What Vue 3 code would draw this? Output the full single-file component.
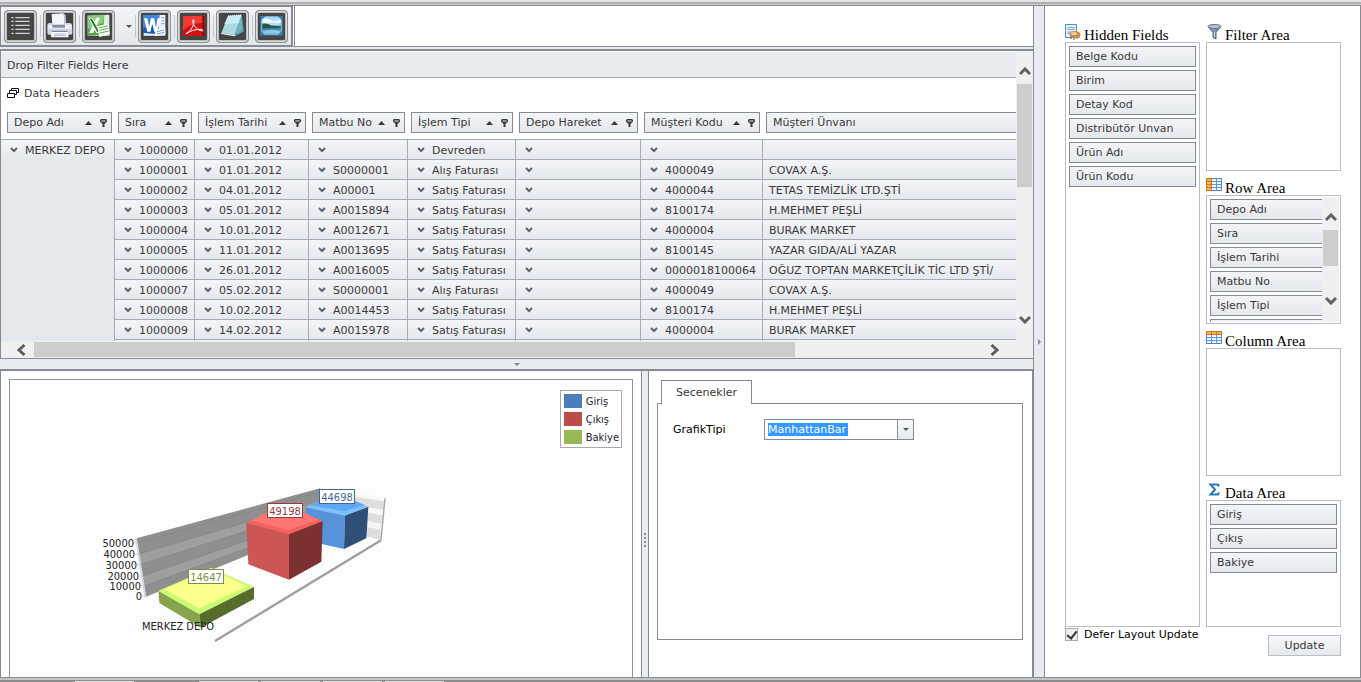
<script setup>
import { ref } from 'vue'

const tools = [
  { id: 'list', label: 'Field list' },
  { id: 'print', label: 'Print' },
  { id: 'excel', label: 'Export to Excel', menu: true },
  { id: 'word', label: 'Export to Word' },
  { id: 'pdf', label: 'Export to PDF' },
  { id: 'note', label: 'Export to text' },
  { id: 'image', label: 'Export to image' }
]

const columns = [
  { title: 'Depo Adı', width: 114, sort: true },
  { title: 'Sıra', width: 80, sort: true },
  { title: 'İşlem Tarihi', width: 114, sort: true },
  { title: 'Matbu No', width: 99, sort: true },
  { title: 'İşlem Tipi', width: 108, sort: true },
  { title: 'Depo Hareket', width: 125, sort: true },
  { title: 'Müşteri Kodu', width: 122, sort: true },
  { title: 'Müşteri Ünvanı', width: 507, sort: false }
]

const rows = [
  ['1000000', '01.01.2012', '', 'Devreden', '', '', ''],
  ['1000001', '01.01.2012', 'S0000001', 'Alış Faturası', '', '4000049', 'COVAX A.Ş.'],
  ['1000002', '04.01.2012', 'A00001', 'Satış Faturası', '', '4000044', 'TETAS TEMİZLİK LTD.ŞTİ'],
  ['1000003', '05.01.2012', 'A0015894', 'Satış Faturası', '', '8100174', 'H.MEHMET PEŞLİ'],
  ['1000004', '10.01.2012', 'A0012671', 'Satış Faturası', '', '4000004', 'BURAK MARKET'],
  ['1000005', '11.01.2012', 'A0013695', 'Satış Faturası', '', '8100145', 'YAZAR GIDA/ALİ YAZAR'],
  ['1000006', '26.01.2012', 'A0016005', 'Satış Faturası', '', '0000018100064', 'OĞUZ TOPTAN MARKETÇİLİK TİC LTD ŞTİ/'],
  ['1000007', '05.02.2012', 'S0000001', 'Alış Faturası', '', '4000049', 'COVAX A.Ş.'],
  ['1000008', '10.02.2012', 'A0014453', 'Satış Faturası', '', '8100174', 'H.MEHMET PEŞLİ'],
  ['1000009', '14.02.2012', 'A0015978', 'Satış Faturası', '', '4000004', 'BURAK MARKET'],
  ['', '', '', '', '', '', '']
]

const hiddenFields = ['Belge Kodu', 'Birim', 'Detay Kod', 'Distribütör Unvan', 'Ürün Adı', 'Ürün Kodu']
const areas = [
  { id: 'filter', title: 'Filter Area', fields: [] },
  { id: 'row', title: 'Row Area', fields: ['Depo Adı', 'Sıra', 'İşlem Tarihi', 'Matbu No', 'İşlem Tipi', ''], scroll: true },
  { id: 'column', title: 'Column Area', fields: [] },
  { id: 'data', title: 'Data Area', fields: ['Giriş', 'Çıkış', 'Bakiye'] }
]

const legend = [
  { name: 'Giriş', tone: 'blue' },
  { name: 'Çıkış', tone: 'red' },
  { name: 'Bakiye', tone: 'green' }
]

const axis = [
  { v: '50000', x: 134, y: 547 },
  { v: '40000', x: 135, y: 558 },
  { v: '30000', x: 137, y: 569 },
  { v: '20000', x: 139, y: 580 },
  { v: '10000', x: 141, y: 590 },
  { v: '0', x: 142, y: 600 }
]

const chartType = ref('ManhattanBar')
const defer = ref(true)
</script>

<template>
  <div class="app">
    <div class="top-strip"></div>
    <div class="body">
      <main class="left">
        <header class="tool-row">
          <div class="toolbar">
            <template v-for="(t, i) in tools" :key="t.id">
              <i v-if="i" class="sep"></i>
              <button class="tool" type="button" :aria-label="t.label">
                <svg viewBox="0 0 99 99" aria-hidden="true">
                  <g v-if="t.id === 'list'" fill="#d4d4d4">
                    <path d="M22 21h7v4h-7zM22 32h7v4h-7zM22 44h7v4h-7zM22 56h7v4h-7zM22 68h7v4h-7z" />
                    <path d="M34 21h43v4H34zM34 32h43v4H34zM34 44h43v4H34zM34 56h43v4H34zM34 68h43v4H34z" />
                  </g>
                  <g v-else-if="t.id === 'print'">
                    <path d="M26 12l36-2 4 34H28z" fill="#f4f7fc" />
                    <path d="M62 10l6 6 2 28h-6z" fill="#b9c2d4" />
                    <path d="M13 44q0-5 6-5h9v6h38v-6h14q6 0 7 5l1 25q0 5-5 5H18q-5 0-5-5z" fill="#cfd5e4" />
                    <path d="M16 44h68l2 12H14z" fill="#eef1f8" />
                    <path d="M28 45h38v8H28z" fill="#8790a8" />
                    <path d="M26 62h48l3 20H24z" fill="#f9fbfe" />
                    <path d="M26 62h48v4H26z" fill="#7c849c" />
                    <path d="M34 72h34M33 77h36" stroke="#a9bcdc" stroke-width="3" />
                  </g>
                  <g v-else-if="t.id === 'excel'">
                    <path d="M17 17l65-3v63H17z" fill="#dff1dc" />
                    <path d="M17 17l50-3-4 60-46 3z" fill="#55a54c" />
                    <path d="M17 17l50-3-4 24L17 58z" fill="#8ac97f" />
                    <path d="M43 23h11L34 69H21z" fill="#f3fbf0" />
                    <path d="M20 25h12l24 44H43z" fill="#fff" />
                    <path d="M23 26h7l23 41h-7z" fill="#2c7d2d" />
                    <path d="M45 48l34-7 5 32-32 8z" fill="#f6fcf6" />
                    <path d="M50 54l27-6M52 61l27-6M53 69l27-6" stroke="#62ac5b" stroke-width="3" />
                  </g>
                  <g v-else-if="t.id === 'word'">
                    <path d="M17 15h65v62H17z" fill="#eef5fd" />
                    <path d="M15 16l49-2-2 59-47-4z" fill="#1d5db4" />
                    <path d="M15 16l49-2-1 26-48 14z" fill="#4189d6" />
                    <path d="M18 25h10l5 26 6-26h9l6 26 5-26h9L58 65H49L43 41l-6 24h-9z" fill="#fff" />
                    <path d="M70 23h9M70 32h9M70 41h9" stroke="#6e9fd9" stroke-width="3" />
                    <path d="M50 60l31-8 2 20-31 7z" fill="#f7fbff" />
                    <path d="M56 65l22-5M57 72l22-5" stroke="#6e9fd9" stroke-width="3" />
                  </g>
                  <g v-else-if="t.id === 'pdf'">
                    <path d="M18 19l64-2v61H18z" fill="#d40f12" />
                    <path d="M18 19l64-2v22Q43 36 18 62z" fill="#ee3b36" />
                    <path d="M76 18l6-1v61h-6z" fill="#8f0708" />
                    <path d="M27 71c8-2 23-20 24-38 0-6-5-5-4 1 3 16 16 27 28 29 4 0 3-5-2-5-15-1-31 4-43 11q-5 3-3 2z" fill="none" stroke="#fff" stroke-width="3" />
                  </g>
                  <g v-else-if="t.id === 'note'">
                    <path d="M77 15l7 50-28 14z" fill="#579aa4" />
                    <path d="M36 18l41-3-21 60-40-6z" fill="#a9d9e2" />
                    <path d="M36 18l41-3-9 25-43 3z" fill="#cbedf2" />
                    <path d="M56 75l21-60 3 46z" fill="#70b4c2" />
                    <path d="M16 69l40 6 1 4-42-7z" fill="#fff" />
                    <path d="M36 18l41-3" stroke="#e3f7fa" stroke-width="4" stroke-dasharray="3 3" />
                  </g>
                  <g v-else>
                    <path d="M17 18h65v58H17z" fill="#70b2df" />
                    <path d="M22 22h55v24H22z" fill="#b5dcf4" />
                    <path d="M22 27q14-4 25 4t30-3v10H22z" fill="#f5fbfe" />
                    <path d="M22 47h55v24H22z" fill="#3c86b6" />
                    <path d="M22 41q14-3 28 6l27 3v4q-30 0-55 1z" fill="#29563f" />
                    <path d="M22 63q30-8 55 0v8H22z" fill="#8cc9e2" />
                    <path d="M17 18h14L17 32zM82 18v14L68 18zM17 76V62l14 14zM82 76H68l14-14z" fill="#2d7cc7" />
                  </g>
                </svg>
              </button>
              <button v-if="t.menu" class="tool-menu" type="button" aria-label="Excel options"><i class="tri-down"></i></button>
            </template>
          </div>
          <div class="tool-rest"></div>
        </header>

        <section class="pivot">
          <div class="pivot-main">
            <div class="pivot-view">
              <div class="drop-filter">Drop Filter Fields Here</div>
              <div class="data-headers">
                <svg class="stack" viewBox="0 0 12 11" fill="#fff" stroke="#111" aria-hidden="true">
                  <path d="M4.500 .5h7v4h-7z" /><path d="M2.500 2.500h7v4h-7z" /><path d="M.5 5.500h7v4h-7z" />
                </svg>
                <span>Data Headers</span>
              </div>
              <table class="grid">
                <colgroup>
                  <col v-for="c in columns" :key="c.title" :style="{ width: c.width + 'px' }" />
                </colgroup>
                <thead>
                  <tr>
                    <th v-for="c in columns" :key="c.title" scope="col">
                      <button class="head-field" type="button">
                        <span>{{ c.title }}</span>
                        <svg v-if="c.sort" viewBox="0 0 24 8" aria-hidden="true">
                          <path d="M1 6l3.500-4L8 6z" />
                          <path d="M17 0h5l1 1v1.500L20.500 5v3h-2V5L16 2.500V1z" />
                          <path d="M17.500 2h4" stroke="#f1f2f6" />
                        </svg>
                      </button>
                    </th>
                  </tr>
                </thead>
                <tbody>
                  <tr v-for="(r, i) in rows" :key="i">
                    <td v-if="i === 0" class="depot" :rowspan="rows.length">
                      <svg class="chev" viewBox="0 0 8 6" aria-hidden="true"><path d="M1 1l3 3 3-3" /></svg>MERKEZ DEPO
                    </td>
                    <td v-for="(v, k) in r" :key="k">
                      <svg v-if="k < 6" class="chev" viewBox="0 0 8 6" aria-hidden="true"><path d="M1 1l3 3 3-3" /></svg>{{ v }}
                    </td>
                  </tr>
                </tbody>
              </table>
            </div>
            <div class="vbar">
              <span class="arrow up"><svg viewBox="0 0 12 9"><path d="M1 7l5-5 5 5" /></svg></span>
              <span class="thumb"></span>
              <span class="track"></span>
              <span class="arrow down"><svg viewBox="0 0 12 9"><path d="M1 2l5 5 5-5" /></svg></span>
            </div>
          </div>
          <div class="hbar">
            <span class="arrow prev"><svg viewBox="0 0 9 12"><path d="M7.500 1L2 6l5.500 5" /></svg></span>
            <span class="thumb"></span>
            <span class="track"></span>
            <span class="arrow next"><svg viewBox="0 0 9 12"><path d="M1.500 1L7 6l-5.500 5" /></svg></span>
            <span class="corner"></span>
          </div>
        </section>

        <div class="h-splitter"><i></i></div>

        <section class="lower">
          <div class="chart-pane">
            <div class="chart">
              <svg class="plot" viewBox="10 380 622 297" preserveAspectRatio="xMinYMin meet" role="img" aria-label="MERKEZ DEPO">
                <svg x="90" y="475" width="310" height="180" viewBox="0 0 930 540">
                  <path d="M140 190L690 40l10 108L168 365z" fill="#8f8f8f" />
                  <path d="M147 237L692 76v22L153 268zM158 303l538-183v16L163 333z" fill="#9f9f9f" />
                  <path d="M142 203L690 52M147 237L692 76M153 268L692 98M158 303l538-183M163 333l533-197" stroke="#858585" stroke-width="2" fill="none" />
                  <path d="M138 190l28 176" stroke="#d8d8d8" stroke-width="6" />
                  <path d="M130 203h12M135 237h12M141 268h12M146 303h12M152 333h12M156 363h12" stroke="#c2c2c2" stroke-width="2" />
                  <path d="M690 40l194 30-12 125-172-40z" fill="#f7f7f7" />
                  <path d="M790 65l93 14-2 26-90-14zM800 106l79 16-2 25-77-16zM800 150l75 15-3 30-80-20z" fill="#dedede" />
                  <path d="M885 70l-12 126" stroke="#a5a5a5" stroke-width="4" />
                  <path d="M873 196L375 498" stroke="#9e9e9e" stroke-width="7" />

                  <path d="M648 97l117 24-3 101-107-24z" fill="#5693db" />
                  <path d="M765 121l70-26-6 95-67 32z" fill="#2f4f77" />
                  <path d="M648 97l42-17h105l40 15-70 27z" fill="#7bc2ff" />
                  <path d="M662 91l30-14h100l32 12-59 20z" fill="#60a6f6" />

                  <path d="M469 143l128 34v137l-122-46z" fill="#cc5654" />
                  <path d="M597 177l101-39-4 122-97 54z" fill="#7c3031" />
                  <path d="M469 143l62-29h108l59 24-101 40z" fill="#f7605d" />
                  <path d="M484 137l48-25h108l45 22-89 31z" fill="#ff7672" />

                  <path d="M205 347l123 70 4 41-124-74z" fill="#87a44d" />
                  <path d="M328 417l164-82v37l-160 86z" fill="#586d2d" />
                  <path d="M205 347l159-69 128 57-164 83z" fill="#c8fb70" />
                  <path d="M222 343l140-60 111 51-146 66z" fill="#fbff8b" />
                </svg>
                <g class="axis">
                  <text v-for="a in axis" :key="a.v" :x="a.x" :y="a.y" text-anchor="end">{{ a.v }}</text>
                  <text x="142" y="630">MERKEZ DEPO</text>
                </g>
                <g class="tag">
                  <g stroke="#3f6797"><rect x="319.500" y="489.500" width="35" height="14" /></g>
                  <g stroke="#943c3a"><rect x="267.500" y="503.500" width="35" height="14" /></g>
                  <g stroke="#77933f"><rect x="188.500" y="569.500" width="35" height="14" /></g>
                  <text x="337" y="501" fill="#3f6797">44698</text>
                  <text x="285" y="515" fill="#943c3a">49198</text>
                  <text x="206" y="581" fill="#77933f">14647</text>
                </g>
              </svg>
              <ul class="legend">
                <li v-for="l in legend" :key="l.name"><i :class="l.tone"></i>{{ l.name }}</li>
              </ul>
            </div>
          </div>
          <div class="v-splitter"><i></i><i></i><i></i><i></i></div>
          <div class="options">
            <button class="tab" type="button">Secenekler</button>
            <div class="tab-body">
              <label for="chart-type">GrafikTipi</label>
              <div class="combo">
                <select id="chart-type" v-model="chartType">
                  <option>ManhattanBar</option>
                </select>
                <span class="combo-arrow"><i class="tri-down"></i></span>
              </div>
            </div>
          </div>
        </section>
      </main>

      <div class="main-splitter"><i></i></div>

      <aside class="fields">
        <div class="field-cols">
          <section class="area">
            <h2>
              <svg viewBox="0 0 16 16" aria-hidden="true">
                <path d="M.5 .5h11v13H.5z" fill="#e9f2fb" stroke="#4f8fd0" />
                <path d="M3 3.500h6v2H3zM3 8h6v1.500H3z" fill="#fff" stroke="#78a9da" />
                <path d="M6 12v3M9 13v3M12 13v2M14 12v2" stroke="#6b4a2a" />
                <ellipse cx="10" cy="10.500" rx="5.500" ry="3.500" fill="#c98a4c" />
                <ellipse cx="9" cy="9.500" rx="3" ry="1.500" fill="#f4cf9c" />
              </svg>
              Hidden Fields
            </h2>
            <div class="box">
              <div class="items">
                <button v-for="f in hiddenFields" :key="f" class="field" type="button">{{ f }}</button>
              </div>
            </div>
          </section>
          <div class="area-stack">
            <section v-for="a in areas" :key="a.id" class="area">
              <h2>
                <svg viewBox="0 0 16 16" aria-hidden="true">
                  <g v-if="a.id === 'filter'">
                    <path d="M2.500 3L7 8.500v5l3 1.500V8.500L14.500 3z" fill="#8493ad" stroke="#53627d" />
                    <path d="M8 8h1v5H8z" fill="#e2e8f2" />
                    <ellipse cx="8.500" cy="2.500" rx="6.500" ry="2" fill="#b7c3d6" stroke="#60708c" />
                  </g>
                  <g v-else-if="a.id === 'row'">
                    <path d="M.5 1.500h15v12H.5z" fill="#f4f8fd" stroke="#4a86c8" />
                    <path d="M.5 1.500h5v12h-5z" fill="#f6b757" stroke="#cf7414" />
                    <path d="M6 4.500h9M6 7.500h9M6 10.500h9M10.500 2v11" stroke="#5c96d4" />
                    <path d="M1 4.500h4M1 7.500h4M1 10.500h4" stroke="#cf7414" />
                  </g>
                  <g v-else-if="a.id === 'column'">
                    <path d="M.5 1.500h15v12H.5z" fill="#f4f8fd" stroke="#4a86c8" />
                    <path d="M1 7.500h14M1 10.500h14M5.500 5v8M10.500 5v8" stroke="#5c96d4" />
                    <path d="M.5 1.500h15v3H.5z" fill="#f6b757" stroke="#cf7414" />
                    <path d="M5.500 2v2M10.500 2v2" stroke="#cf7414" />
                  </g>
                  <path v-else d="M13 4.500l-1-2H4.500l4.500 5-4.500 5H12l1-2" fill="none" stroke="#2c78bf" stroke-width="2" />
                </svg>
                {{ a.title }}
              </h2>
              <div class="box">
                <div class="items">
                  <button v-for="f in a.fields" :key="f" class="field" type="button">{{ f }}</button>
                </div>
                <div v-if="a.scroll" class="vbar small">
                  <span class="arrow up"><svg viewBox="0 0 12 9"><path d="M1 7l5-5 5 5" /></svg></span>
                  <span class="thumb"></span>
                  <span class="track"></span>
                  <span class="arrow down"><svg viewBox="0 0 12 9"><path d="M1 2l5 5 5-5" /></svg></span>
                </div>
              </div>
            </section>
          </div>
        </div>
        <footer class="actions">
          <label><input v-model="defer" type="checkbox" />Defer Layout Update</label>
          <button type="button">Update</button>
        </footer>
      </aside>
    </div>
    <div class="bottom-strip"><i></i><b></b><i></i><i></i><i></i><i></i></div>
  </div>
</template>

<style>
html, body, #app { height: 100%; }
</style>

<style scoped>
* { box-sizing: border-box; }
.app {
  display: flex; flex-direction: column; height: 100vh; overflow: hidden;
  background: #fff; color: #393939;
  font: 11px/14px "DejaVu Sans", Verdana, sans-serif;
}
button { font: inherit; color: inherit; margin: 0; }
.top-strip { flex: none; height: 5px; background: linear-gradient(#e6e6e6 2px, #b0b0b0 2px 4px, #cfcfcf 4px); }
.body { flex: 1; min-height: 0; display: flex; border-top: 1px solid #868a92; }
.left { flex: 1; min-width: 0; display: flex; flex-direction: column; background: #e8ebf0; }

/* toolbar */
.tool-row { flex: none; display: flex; height: 41px; border-bottom: 1px solid #868a92; background: #fff; }
.toolbar {
  display: flex; align-items: center; padding: 0 3px; width: 293px;
  border: 1px solid #868a92; border-width: 1px 2px 1px 1px;
  background: linear-gradient(#f4f5f9, #e3e6eb);
}
.tool {
  flex: none; width: 33px; height: 33px; padding: 0; border: 1px solid #8f8f8f; border-radius: 4px;
  background: #454545; box-shadow: inset 0 0 0 1px #dcdcdc, inset 0 0 0 2px #bcbcbc; overflow: hidden;
}
.tool svg { display: block; width: 33px; height: 33px; margin: -1px; }
.sep { flex: none; width: 1px; height: 22px; margin: 0 2px 0 3px; background: #c3c8d0; }
.tool-menu { flex: none; width: 17px; height: 33px; padding: 0 0 0 11px; border: 0; background: none; }
.tri-down { display: block; width: 0; border: 3px solid transparent; border-top-color: #50545b; border-bottom: 0; }
.tool-rest { flex: 1; margin-left: 1px; border-left: 1px solid #868a92; }

/* pivot grid */
.pivot { flex: none; margin-top: 2px; border: 1px solid #868a92; border-top-width: 2px; border-right: 0; }
.pivot-main { display: flex; height: 290px; background: #fff; }
.pivot-view { flex: 1; min-width: 0; overflow: hidden; }
.drop-filter { height: 27px; padding: 7px 6px 0; background: #e8ebf0; border-bottom: 1px solid #a5abb7; border-top: 1px solid #fff; }
.data-headers { display: flex; align-items: center; gap: 5px; height: 30px; padding: 0 6px; }
.data-headers span { padding-top: 2px; }
.stack { width: 12px; height: 11px; }
.grid { table-layout: fixed; width: 1269px; border-collapse: separate; border-spacing: 0; }
th { padding: 4px 3px 6px; font-weight: normal; height: 32px; border-bottom: 1px solid #a5abb7; }
th:first-child { padding-left: 6px; }
.head-field {
  display: flex; justify-content: space-between; align-items: center; width: 100%; height: 21px;
  padding: 1px 0 0 6px; border: 1px solid #868a92; background: linear-gradient(#f4f5f9, #e5e8ed);
  white-space: nowrap; overflow: hidden;
}
.head-field svg { flex: none; width: 24px; height: 8px; margin-right: 3px; fill: #393939; }
td {
  height: 20px; padding: 2px 0 0 9px; white-space: nowrap; overflow: hidden;
  border-right: 1px solid #a5abb7; border-bottom: 1px solid #a5abb7;
  background: linear-gradient(#f4f5f9, #e5e8ed);
}
td:last-child { padding-left: 6px; }
td.depot { vertical-align: top; padding-top: 4px; background: linear-gradient(#f4f5f9, #e5e8ed 20px); }
.chev { width: 8px; height: 6px; margin-right: 7px; vertical-align: 1px; fill: none; stroke: #5c636e; stroke-width: 2; }

/* scroll bars */
.vbar { flex: none; display: flex; flex-direction: column; width: 17px; background: #f0f0f0; }
.arrow { flex: none; display: flex; align-items: center; justify-content: center; }
.arrow svg { fill: none; stroke: #606060; stroke-width: 3; }
.vbar .arrow { height: 33px; }
.vbar .arrow svg { width: 12px; height: 9px; }
.vbar .up { padding-top: 8px; }
.vbar .down { padding-bottom: 10px; }
.thumb { background: #cdcdcd; }
.vbar .thumb { flex: 103; margin: 0 1px; }
.vbar .track { flex: 120; }
.small .thumb { flex: 36; }
.small .track { flex: 22; }
.hbar { display: flex; height: 17px; padding: 1px 0; background: #f0f0f0; }
.hbar .arrow { width: 33px; }
.hbar .arrow svg { width: 9px; height: 12px; }
.hbar .prev { padding-left: 8px; }
.hbar .next { padding-right: 10px; }
.hbar .thumb { flex: 760; }
.hbar .track { flex: 188; }
.corner { flex: none; width: 17px; }

/* splitters */
.h-splitter { flex: none; height: 10px; display: flex; align-items: center; justify-content: center; }
.h-splitter i { width: 0; border: 3px solid transparent; border-top-color: #868a92; border-bottom: 0; }
.v-splitter {
  flex: none; width: 8px; border: 1px solid #868a92; border-width: 0 1px; background: #e8ebf0;
  display: flex; flex-direction: column; align-items: center; justify-content: center; gap: 2px; padding-top: 32px;
}
.v-splitter i { width: 2px; height: 2px; background: #868a92; }
.main-splitter {
  flex: none; width: 12px; border: 1px solid #868a92; border-width: 0 1px; background: #e8ebf0;
  display: flex; align-items: center; justify-content: center;
}
.main-splitter i { height: 0; border: 3px solid transparent; border-left-color: #868a92; border-right: 0; }

/* lower panes */
.lower { flex: 1; min-height: 0; display: flex; border-top: 2px solid #868a92; border-left: 1px solid #868a92; background: #fff; }
.chart-pane { flex: 624; min-width: 0; padding: 8px 8px 0; }
.chart { position: relative; height: 100%; border: 1px solid #8f9196; border-bottom: 0; background: #fdfdfe; }
.plot { display: block; width: 100%; height: 100%; font: 11px "DejaVu Sans Condensed", "DejaVu Sans", Tahoma, sans-serif; }
.axis { fill: #222; }
.tag rect { fill: #fff; }
.tag text { text-anchor: middle; }
.legend {
  position: absolute; top: 10px; right: 10px; margin: 0; padding: 3px 2px 3px 3px; list-style: none;
  border: 1px solid #a9a9a9; background: #fff; color: #223;
  font: 11px/16px "DejaVu Sans Condensed", "DejaVu Sans", Tahoma, sans-serif;
}
.legend li { display: flex; gap: 4px; height: 14px; }
.legend li + li { margin-top: 4px; }
.legend i { width: 18px; height: 14px; }
.blue { background: #4a7ebb; }
.red { background: #be4b48; }
.green { background: #98b954; }
.options { flex: 366; min-width: 0; padding: 9px 9px 37px 8px; display: flex; flex-direction: column; border-right: 1px solid #868a92; }
.tab {
  position: relative; z-index: 1; align-self: flex-start; flex: none; width: 91px; height: 24px; margin: 0 0 -1px 4px; padding: 1px 0 0;
  border: 1px solid #868a92; border-bottom: 0; background: #fff;
}
.tab-body { flex: 1; display: flex; align-items: flex-start; padding: 15px; border: 1px solid #868a92; color: #000; }
.tab-body label { width: 91px; padding-top: 4px; }
.combo { position: relative; width: 150px; height: 21px; }
.combo select {
  appearance: none; width: 100%; height: 21px; padding: 1px 20px 0 3px; border: 1px solid #868a92; border-radius: 0;
  font: inherit; color: #fff; background: linear-gradient(#39f, #39f) 3px 3px / 80px 13px no-repeat #fff;
}
.combo option { color: #000; }
.combo-arrow {
  position: absolute; top: 1px; right: 1px; bottom: 1px; width: 16px; display: grid; place-items: center; pointer-events: none;
  border-left: 1px solid #868a92; background: linear-gradient(#f9fafc, #e5e8ed);
}

/* field list */
.fields { flex: none; width: 316px; padding: 12px 19px 0 20px; border-right: 1px solid #868a92; display: flex; flex-direction: column; }
.field-cols { flex: 1; min-height: 0; display: grid; grid-template-columns: 1fr 1fr; gap: 6px; }
.area-stack { display: flex; flex-direction: column; min-height: 0; }
.area { flex: 153; min-height: 0; display: flex; flex-direction: column; }
.area-stack .area:last-child { flex: 151; }
.area h2 {
  flex: none; display: flex; align-items: flex-end; gap: 3px; height: 24px; margin: 0;
  font: 15px/14px "Liberation Serif", "Times New Roman", serif; color: #000; white-space: nowrap;
}
.area h2 svg { width: 16px; height: 16px; margin-bottom: 2px; }
.box { flex: 1; min-height: 0; display: flex; padding: 1px; border: 1px solid #b8bdc6; }
.items { flex: 1; min-width: 0; display: flex; flex-direction: column; gap: 3px; padding: 2px; overflow: hidden; }
.field {
  flex: none; height: 21px; padding: 1px 6px 0; text-align: left; border: 1px solid #868a92;
  background: linear-gradient(#f4f5f9, #e5e8ed); white-space: nowrap;
}
.items:not(:last-child) { padding-right: 0; }
.items:not(:last-child) .field { border-right: 0; }
.actions { flex: none; height: 50px; display: flex; justify-content: space-between; align-items: flex-start; color: #000; }
.actions label { display: flex; align-items: center; gap: 6px; padding-top: 1px; line-height: 13px; white-space: nowrap; }
.actions input {
  appearance: none; display: grid; place-items: center; width: 13px; height: 13px; margin: 0;
  border: 1px solid #a5abb7; background: #eceef1;
}
.actions input:checked::before {
  content: ""; width: 4px; height: 8px; margin-bottom: 2px; border: solid #333; border-width: 0 2px 2px 0; transform: rotate(38deg);
}
.actions button {
  width: 73px; height: 21px; margin-top: 8px; padding: 1px 0 0; color: #393939;
  border: 1px solid #b8bdc6; background: linear-gradient(#f7f9fb, #e5e8ed);
}

.bottom-strip { flex: none; display: flex; gap: 3px; height: 5px; padding: 4px 0 0 75px; background: linear-gradient(#868a92 1px, #c6c6c6 1px 3px, #8c8c8c 3px); }
.bottom-strip i { width: 59px; background: #e2e2e2; }
.bottom-strip b { width: 59px; }
</style>
